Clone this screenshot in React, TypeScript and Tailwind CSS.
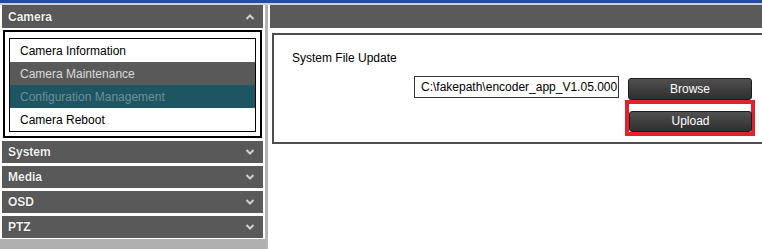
import React from 'react';

const font = { fontFamily: '"Liberation Sans", Arial, sans-serif' };

function Chevron({ up = false }: { up?: boolean }) {
  return (
    <svg width="10" height="8" viewBox="0 0 10 8" className="shrink-0">
      <path
        d={up ? 'M1.5 6 L5 2.5 L8.5 6' : 'M1.5 2 L5 5.5 L8.5 2'}
        fill="none"
        stroke="#cfcfcf"
        strokeWidth="2"
      />
    </svg>
  );
}

function SectionHeader({ label, open = false }: { label: string; open?: boolean }) {
  return (
    <div
      className={`mx-[2px] flex items-center justify-between bg-[#595959] pl-[6px] pr-[8px] ${
        open ? 'h-[23px]' : 'h-[22px]'
      }`}
    >
      <span className="text-[12px] font-bold text-[#f2f2f2] [text-shadow:0_0_1px_#222]">{label}</span>
      <Chevron up={open} />
    </div>
  );
}

const subItems = [
  { label: 'Camera Information', cls: 'bg-white text-black' },
  { label: 'Camera Maintenance', cls: 'bg-[#595959] text-[#dadada]' },
  { label: 'Configuration Management', cls: 'bg-[#1d5562] text-[#6e8f97]' },
  { label: 'Camera Reboot', cls: 'bg-white text-black' },
];

function DarkButton({ label }: { label: string }) {
  return (
    <button className="h-full w-full rounded-[3px] border border-[#1c1c1c] bg-gradient-to-b from-[#505050] to-[#2f2f2f] text-[12px] text-white">
      {label}
    </button>
  );
}

export default function App() {
  return (
    <div className="flex h-[249px] w-[762px] flex-col overflow-hidden bg-white" style={font}>
      <div className="h-[3px] bg-[#1f4f9e]" />
      <div className="h-[2px] bg-[#cfcfcf]" />
      <div className="flex flex-1">
        {/* sidebar */}
        <aside className="flex w-[265px] flex-col">
          <SectionHeader label="Camera" open />
          <div className="mx-[3px] mt-[2px] h-[108px] border-2 border-black px-[4px] pt-[6px]">
            <div className="border border-black">
              {subItems.map((it) => (
                <div key={it.label} className={`flex h-[23px] items-center pl-[10px] text-[12px] ${it.cls}`}>
                  {it.label}
                </div>
              ))}
            </div>
          </div>
          <div className="mt-[3px] flex flex-col gap-[3px]">
            <SectionHeader label="System" />
            <SectionHeader label="Media" />
            <SectionHeader label="OSD" />
            <SectionHeader label="PTZ" />
          </div>
          <div className="mt-[1px] flex-1 bg-[#b0b0b0]" />
        </aside>
        <div className="w-[3px] bg-[#b4b4b4]" />

        {/* main */}
        <main className="flex flex-1 flex-col pl-[2px]">
          <div className="h-[23px] bg-[#5a5a5a]" />
          <section className="ml-[2px] mt-[5px] h-[111px] border-2 border-r-0 border-[#4d4d4d]">
            <div className="pl-[18px] pt-[14px] text-[12px] text-black">System File Update</div>
            <div className="mt-[9px] flex items-center justify-end gap-[9px] pr-[10px]">
              <div className="flex h-[22px] w-[205px] items-center border border-[#333] pl-[6px] text-[12px] text-black">
                C:\fakepath\encoder_app_V1.05.000
              </div>
              <div className="h-[22px] w-[124px]">
                <DarkButton label="Browse" />
              </div>
            </div>
            <div className="mt-[2px] flex justify-end pr-[7px]">
              <div className="w-[130px] border-4 border-[#e4202b] pb-[3px] pt-[4px]">
                <div className="h-[21px] w-[123px]">
                  <DarkButton label="Upload" />
                </div>
              </div>
            </div>
          </section>
        </main>
      </div>
    </div>
  );
}
